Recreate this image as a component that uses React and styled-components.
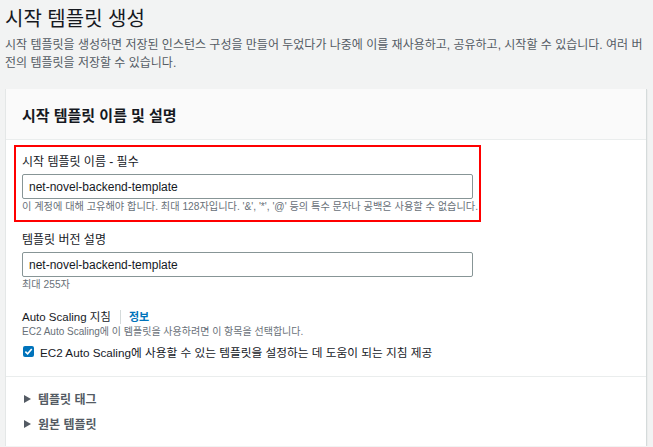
import React from "react"
import styled, { createGlobalStyle } from "styled-components"

const GlobalStyle = createGlobalStyle`
  body {
    margin: 0;
    background: #f2f3f3;
    font-family: "Liberation Sans", "Noto Sans CJK KR", sans-serif;
    color: #16191f;
  }
`

export default function App() {
  return (
    <>
      <GlobalStyle />
      <Page>
        <Title>시작 템플릿 생성</Title>
        <Description>
          시작 템플릿을 생성하면 저장된 인스턴스 구성을 만들어 두었다가 나중에 이를 재사용하고, 공유하고, 시작할 수 있습니다. 여러 버전의 템플릿을 저장할 수 있습니다.
        </Description>

        <Card>
          <CardHeader>시작 템플릿 이름 및 설명</CardHeader>
          <CardBody>
            {/* highlighted field */}
            <Highlight>
              <Field>
                <Label>시작 템플릿 이름 - 필수</Label>
                <Input readOnly value="net-novel-backend-template" />
                <Help>이 계정에 대해 고유해야 합니다. 최대 128자입니다. '&', '*', '@' 등의 특수 문자나 공백은 사용할 수 없습니다.</Help>
              </Field>
            </Highlight>

            <Field $top={10}>
              <Label>템플릿 버전 설명</Label>
              <Input readOnly value="net-novel-backend-template" />
              <Help>최대 255자</Help>
            </Field>

            <GuideBlock>
              <GuideLabel>
                Auto Scaling 지침
                <Divider />
                <InfoLink>정보</InfoLink>
              </GuideLabel>
              <SubHelp>EC2 Auto Scaling에 이 템플릿을 사용하려면 이 항목을 선택합니다.</SubHelp>
              <CheckRow>
                <CheckBox>
                  <svg width="9" height="9" viewBox="0 0 10 10">
                    <path d="M1.5 5.2 L4 7.6 L8.6 2.2" fill="none" stroke="#fff" strokeWidth="1.8" />
                  </svg>
                </CheckBox>
                EC2 Auto Scaling에 사용할 수 있는 템플릿을 설정하는 데 도움이 되는 지침 제공
              </CheckRow>
            </GuideBlock>
          </CardBody>

          <Expanders>
            <ExpandRow>
              <Caret />
              템플릿 태그
            </ExpandRow>
            <ExpandRow>
              <Caret />
              원본 템플릿
            </ExpandRow>
          </Expanders>
        </Card>
      </Page>
    </>
  )
}

const Page = styled.div`
  padding: 5px 7px 0 5px;
`

const Title = styled.h1`
  margin: 0;
  font-size: 20px;
  line-height: 28px;
  font-weight: normal;
  color: #16191f;
`

const Description = styled.p`
  margin: 3px 0 0;
  font-size: 12px;
  line-height: 18px;
  color: #545b64;
`

const Card = styled.div`
  margin-top: 17px;
  background: #fff;
  border-left: 1px solid #e4e7e7;
  box-shadow: 1px 0 0 #d5dbdb, 1px 1px 1px rgba(0, 28, 36, 0.15);
`

const CardHeader = styled.div`
  height: 50px;
  display: flex;
  align-items: center;
  padding: 0 16px;
  background: #fafafa;
  border-bottom: 1px solid #eaeded;
  font-size: 15px;
  font-weight: bold;
`

const CardBody = styled.div`
  padding: 5px 16px 16px;
  border-bottom: 1px solid #eaeded;
`

const Highlight = styled.div`
  width: 451px;
  margin: 0 -8px;
  padding: 7px 6px 5px;
  border: 2px solid #ff0000;
`

const Field = styled.div`
  display: flex;
  flex-direction: column;
  margin-top: ${p => p.$top || 0}px;
`

const Label = styled.label`
  font-size: 12px;
  line-height: 16px;
  color: #16191f;
  margin-bottom: 4px;
`

const Input = styled.input`
  box-sizing: border-box;
  width: 451px;
  height: 25px;
  padding: 0 6px;
  border: 1px solid #879596;
  border-radius: 2px;
  font-family: inherit;
  font-size: 12px;
  color: #16191f;
  background: #fff;
  outline: none;
`

const Help = styled.div`
  font-size: 10.2px;
  line-height: 16px;
  white-space: nowrap;
  color: #687078;
`

const GuideBlock = styled.div`
  margin-top: 16px;
`

const GuideLabel = styled.div`
  display: flex;
  align-items: center;
  font-size: 11.5px;
  line-height: 16px;
`

const Divider = styled.span`
  width: 1px;
  height: 14px;
  margin: 0 8px 0 9px;
  background: #d5dbdb;
`

const InfoLink = styled.a`
  font-size: 11px;
  font-weight: bold;
  color: #0073bb;
`

const SubHelp = styled.div`
  font-size: 10px;
  line-height: 14px;
  color: #687078;
`

const CheckRow = styled.div`
  display: flex;
  align-items: center;
  margin-top: 3px;
  height: 18px;
  font-size: 11.7px;
  color: #16191f;
`

const CheckBox = styled.span`
  box-sizing: border-box;
  width: 11px;
  height: 11px;
  margin: 0 6px 0 1px;
  display: flex;
  align-items: center;
  justify-content: center;
  background: #0073bb;
  border-radius: 2px;
`

const Expanders = styled.div`
  padding: 9px 16px 10px 18px;
`

const ExpandRow = styled.div`
  display: flex;
  align-items: center;
  height: 25px;
  font-size: 12px;
  font-weight: bold;
  color: #545b64;
`

const Caret = styled.span`
  width: 0;
  height: 0;
  margin-right: 7px;
  border-left: 7px solid #545b64;
  border-top: 4px solid transparent;
  border-bottom: 4px solid transparent;
`
